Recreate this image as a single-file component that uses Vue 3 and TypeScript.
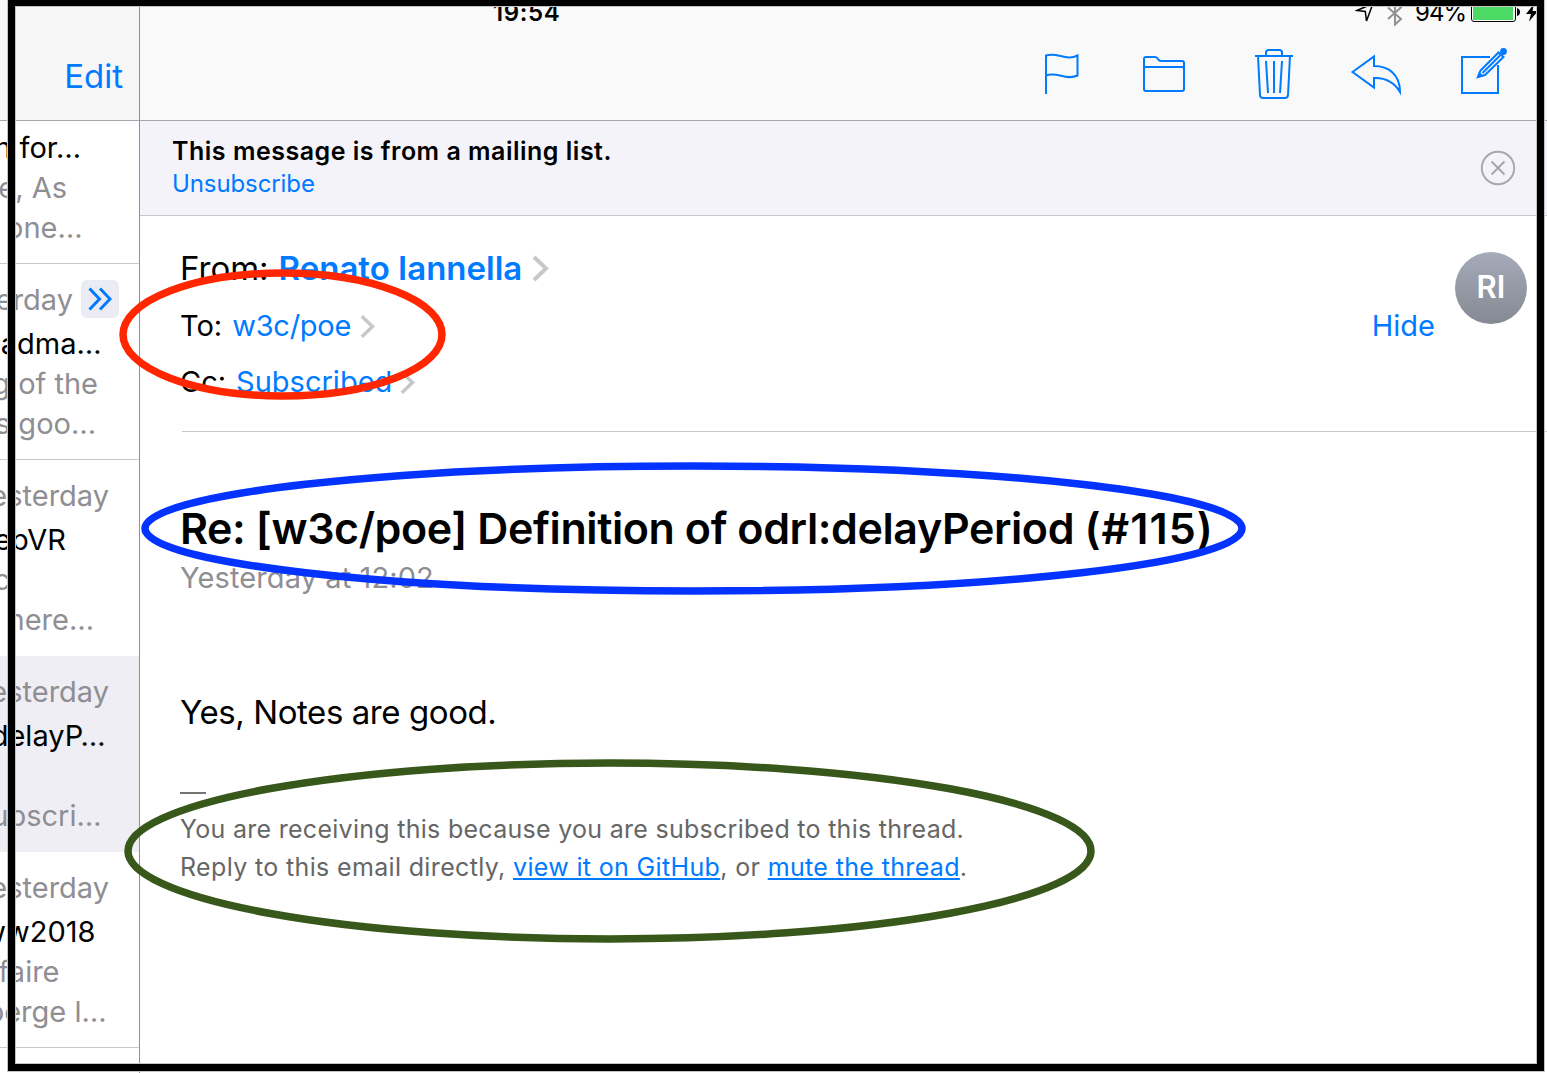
<script setup lang="ts">
interface Line {
  text: string
  right: number
  tone?: 'strong'
  expand?: boolean
}
interface MailItem {
  lines: Line[]
  selected?: boolean
}

const items: MailItem[] = [
  {
    lines: [
      { text: 'n for…', right: 58, tone: 'strong' },
      { text: 'e, As', right: 72 },
      { text: 'one…', right: 56.5 },
    ],
  },
  {
    lines: [
      { text: 'erday', right: 20, expand: true },
      { text: 'oadma…', right: 37.5, tone: 'strong' },
      { text: 'g of the', right: 41 },
      { text: 's goo…', right: 43 },
    ],
  },
  {
    lines: [
      { text: 'esterday', right: 30 },
      { text: 'ebVR', right: 73, tone: 'strong' },
      { text: 'c', right: 129 },
      { text: 'here…', right: 45 },
    ],
  },
  {
    selected: true,
    lines: [
      { text: 'esterday', right: 30 },
      { text: 'delayP…', right: 33.5, tone: 'strong' },
      { text: '', right: 0 },
      { text: 'ubscri…', right: 37.5 },
    ],
  },
  {
    lines: [
      { text: 'esterday', right: 30 },
      { text: 'ww2018', right: 43.5, tone: 'strong' },
      { text: 'faire', right: 79.5 },
      { text: 'berge l…', right: 32.5 },
    ],
  },
  {
    lines: [
      { text: 'esterday', right: 26 },
      { text: '', right: 0 },
      { text: '', right: 0 },
      { text: '', right: 0 },
    ],
  },
]
</script>

<template>
  <div class="screen">
    <aside class="sidebar">
      <header class="side-head"><span class="edit">Edit</span></header>
      <ul class="list">
        <li v-for="(item, i) in items" :key="i" class="item" :class="{ selected: item.selected }">
          <div
            v-for="(line, j) in item.lines"
            :key="j"
            class="line"
            :class="[line.tone, { stamp: item.lines.length === 4 && j === 0 }]"
            :style="{ paddingRight: line.right + 'px' }"
          >
            <span>{{ line.text }}</span>
            <span v-if="line.expand" class="expand">
              <svg width="24" height="24" viewBox="0 0 24 24"><path d="M1.5 1.5 11.5 12 1.5 22.5M12 1.5 22 12 12 22.5" /></svg>
            </span>
          </div>
        </li>
      </ul>
    </aside>

    <main class="main">
      <header class="head">
        <div class="status">
          <span class="time">19:54</span>
          <div class="indicators">
            <svg class="loc" width="20" height="26" viewBox="0 0 20 26"><path d="M2 10.5 18 3.5 11.5 21 10.3 11.5Z" /></svg>
            <svg class="bt" width="18" height="28" viewBox="0 0 18 28"><path d="M2 7.5 15 19 9 24.5V1.5L15 7.5 2 19" /></svg>
            <span class="pct">94%</span>
            <span class="battery"><i></i></span>
            <svg class="nub" width="4" height="8" viewBox="0 0 4 8"><path d="M0 0Q3 1 3 4T0 8Z" /></svg>
            <svg class="bolt" width="12" height="18" viewBox="0 0 12 18"><path d="M8 0 0 10H5L3 17.5 12 7H6.5Z" /></svg>
          </div>
        </div>
        <nav class="tools">
          <svg class="flag" width="40" height="54" viewBox="1042 47 40 54"><path d="M1046 94V55.5C1057 51.5 1066 61.5 1077.5 55.5V75.5C1066 81 1057 71 1046 75.5" /></svg>
          <svg class="folder" width="50" height="54" viewBox="1140 47 50 54"><path d="M1144 89V59Q1144 57 1146 57H1155Q1157 57 1158 59T1161 61H1182Q1184 61 1184 63V89Q1184 91 1182 91H1146Q1144 91 1144 89ZM1144 69Q1144 67 1146 67H1182Q1184 67 1184 69" /></svg>
          <svg class="trash" width="44" height="54" viewBox="1252 47 44 54"><path d="M1255 56H1293M1266 56V52.5Q1266 50 1268.5 50H1279.5Q1282 50 1282 52.5V56M1258 56 1260 95Q1260.2 98 1263 98H1285Q1287.8 98 1288 95L1290 56M1266 61 1268 93M1274 61V93M1282 61 1280 93" /></svg>
          <svg class="reply" width="56" height="54" viewBox="1348 47 56 54"><path d="M1352.5 72 1374 56.5V66C1388 66 1400 74 1400 92C1394 82 1386 77.5 1374 78V87.5Z" /></svg>
          <svg class="compose" width="52" height="54" viewBox="1458 47 52 54">
            <path d="M1490 57H1462V93H1498V65" />
            <path d="M1478 77 1480.5 70.5 1498.5 52.5 1503.500 57 1485 75ZM1482.500 73 1501 54.5" />
            <path class="solid" d="M1476.5 78.5 1479 71.5 1483.5 76Z" />
            <circle class="solid" cx="1503.5" cy="51.5" r="3.4" />
          </svg>
        </nav>
      </header>

      <section class="banner">
        <div>
          <p class="b-title">This message is from a mailing list.</p>
          <p class="b-link">Unsubscribe</p>
        </div>
        <svg class="close" width="36" height="36" viewBox="0 0 36 36"><circle cx="18" cy="18" r="16.2" /><path d="M11.5 11.5 24.5 24.5M24.5 11.5 11.5 24.5" /></svg>
      </section>

      <section class="meta">
        <div class="fields">
          <p class="row from"><span>From:</span><b>Renato Iannella</b><svg class="chev" width="18" height="27" viewBox="0 0 18 27"><path d="M2 2 14 13.5 2 25" /></svg></p>
          <p class="row to"><span>To:</span><a>w3c/poe</a><svg class="chev" width="16" height="25" viewBox="0 0 18 27"><path d="M2 2 14 13.5 2 25" /></svg></p>
          <p class="row cc"><span>Cc:</span><a>Subscribed</a><svg class="chev" width="16" height="25" viewBox="0 0 18 27"><path d="M2 2 14 13.5 2 25" /></svg></p>
        </div>
        <a class="hide">Hide</a>
        <div class="avatar">RI</div>
      </section>

      <article class="body">
        <h1>Re: [w3c/poe] Definition of odrl:delayPeriod <span class="issue">(#115)</span></h1>
        <p class="date">Yesterday at 12:02</p>
        <p class="text">Yes, Notes are good.</p>
        <div class="dash"></div>
        <p class="foot">You are receiving this because you are subscribed to this thread.</p>
        <p class="foot reply-line">Reply to this email directly, <a>view it on GitHub</a>, or <a>mute the thread</a>.</p>
      </article>
    </main>

    <svg class="marks" width="1547" height="1073" viewBox="0 0 1547 1073">
      <rect x="11.5" y="2.5" width="1529" height="1065" fill="none" stroke="#c4c4c4" stroke-width="9" />
      <rect x="11.5" y="2.5" width="1529" height="1065" fill="none" stroke="#000" stroke-width="7" />
      <ellipse cx="282.5" cy="334.5" rx="159.5" ry="61.5" stroke="#ff2600" />
      <ellipse cx="693.5" cy="528.5" rx="548.5" ry="62.5" stroke="#0433ff" />
      <ellipse cx="609.5" cy="851" rx="481.5" ry="88" stroke="#38571a" />
    </svg>
  </div>
</template>

<style>
body { margin: 0; overflow: hidden; background: #fff; }
</style>

<style scoped>
* { box-sizing: border-box; }
p, h1, ul { margin: 0; padding: 0; }
.screen {
  position: relative;
  display: flex;
  width: 1547px;
  height: 1073px;
  overflow: hidden;
  background: #fff;
  color: #000;
  font-family: Inter, "Liberation Sans", sans-serif;
  font-size: 29px;
  white-space: nowrap;
}
svg { display: block; flex: none; fill: none; }
a, b { color: #007aff; }
.sidebar { display: flex; flex-direction: column; flex: none; width: 140px; border-right: 1px solid #8e8e93; overflow: hidden; }
.side-head { display: flex; justify-content: flex-end; height: 121px; padding: 56px 16px 0 0; background: #f7f7f7; border-bottom: 1px solid #a7a7ab; }
.edit { color: #007aff; font-size: 33px; line-height: 40px; }
.list { flex: 1; list-style: none; overflow: hidden; }
.item { display: flex; flex-direction: column; justify-content: flex-end; height: 196px; padding-bottom: 15px; border-bottom: 1px solid #c8c7cc; }
.item:first-child { height: 143px; }
.item:nth-child(3) { border-color: #fff; }
.item.selected { background: #efeef4; border-color: #efeef4; }
.line { display: flex; justify-content: flex-end; height: 40px; line-height: 40px; color: #8e8e93; }
.line.strong { color: #000; }
.line > span { flex: none; }
.stamp { margin-bottom: 4px; }
.expand { display: flex; align-items: center; justify-content: center; width: 38px; height: 38px; margin-left: 8px; border-radius: 6px; background: #ebebf4; }
.expand path { stroke: #007aff; stroke-width: 3; }

.main { display: flex; flex-direction: column; flex: 1; min-width: 0; }
.head { height: 121px; background: #f9f9f9; border-bottom: 1px solid #a7a7ab; }
.status { display: flex; justify-content: space-between; height: 47px; padding: 0 9px 0 353px; font-size: 24px; line-height: 25px; }
.time { font-weight: 600; letter-spacing: 0.6px; }
.indicators { display: flex; align-items: flex-start; }
.loc path { stroke: #000; stroke-width: 1.5; }
.bt { margin-left: 11px; }
.bt path { stroke: #8e8e93; stroke-width: 1.9; }
.pct { margin-left: 11px; letter-spacing: -1px; }
.battery { width: 45px; height: 22px; margin-left: 5px; padding: 1px; border: 1px solid #000; border-radius: 3px; background: #fff; }
.battery i { display: block; width: 40px; height: 18px; background: #4cd964; }
.nub { margin: 8px 0 0 1px; fill: #000; }
.bolt { margin: 4px 0 0 5px; fill: #000; }
.tools { display: flex; justify-content: flex-end; padding-right: 37px; }
.tools svg { stroke: #007aff; stroke-width: 2; }
.tools .solid { fill: #007aff; stroke: none; }
.folder { margin-left: 58px; }
.trash { margin-left: 62px; }
.reply { margin-left: 52px; }
.compose { margin-left: 54px; }

.banner { display: flex; justify-content: space-between; height: 95px; padding: 14px 31px 0 32px; background: #f4f3f9; border-bottom: 1px solid #c8c7cc; line-height: 33px; }
.b-title { font-size: 25px; font-weight: 600; letter-spacing: 0.5px; }
.b-link { margin-top: -1px; color: #007aff; font-size: 24px; letter-spacing: -0.1px; }
.close { margin-top: 15px; stroke: #a5a5aa; stroke-width: 1.9; }

.meta { display: flex; height: 216px; margin-left: 42px; border-bottom: 1px solid #c8c7cc; }
.fields { flex: 1; padding-top: 32px; margin-left: -2px; }
.row { display: flex; align-items: center; height: 40px; line-height: 40px; }
.from { font-size: 33px; margin-bottom: 18px; }
.from b { font-weight: 600; margin-left: 10px; }
.from .chev { margin-left: 10px; }
.to { margin-bottom: 16px; }
.to a { margin-left: 10px; letter-spacing: -0.25px; }
.cc a { margin-left: 10px; }
.chev { margin-left: 9px; stroke: #c7c7cc; stroke-width: 4; }
.cc .chev { margin-left: 8px; }
.hide { margin: 90px 20px 0 0; line-height: 40px; }
.avatar { width: 72px; height: 72px; margin: 36px 20px 0 0; border-radius: 50%; background: linear-gradient(#a5abb9, #858993); color: #fff; font-size: 31px; font-weight: 600; line-height: 70px; text-align: center; }

.body { padding: 65px 0 0 40px; }
h1 { font-size: 43px; font-weight: 600; line-height: 62px; letter-spacing: -0.41px; }
.issue { letter-spacing: 1.05px; }
.date { margin-top: -1px; line-height: 40px; letter-spacing: 0.1px; color: #8e8e93; }
.text { margin-top: 93px; font-size: 33px; line-height: 42px; letter-spacing: -0.42px; }
.dash { width: 26px; height: 2px; margin-top: 59px; background: #747474; }
.foot { color: #666; font-size: 25px; line-height: 38px; letter-spacing: 0.28px; }
.dash + .foot { margin-top: 16px; }
.reply-line { letter-spacing: 0.35px; }
.foot a { text-decoration: underline; text-decoration-thickness: 2px; text-underline-offset: 2px; }
.marks { position: absolute; inset: 0; pointer-events: none; }
.marks ellipse { stroke-width: 7.5; }
</style>
